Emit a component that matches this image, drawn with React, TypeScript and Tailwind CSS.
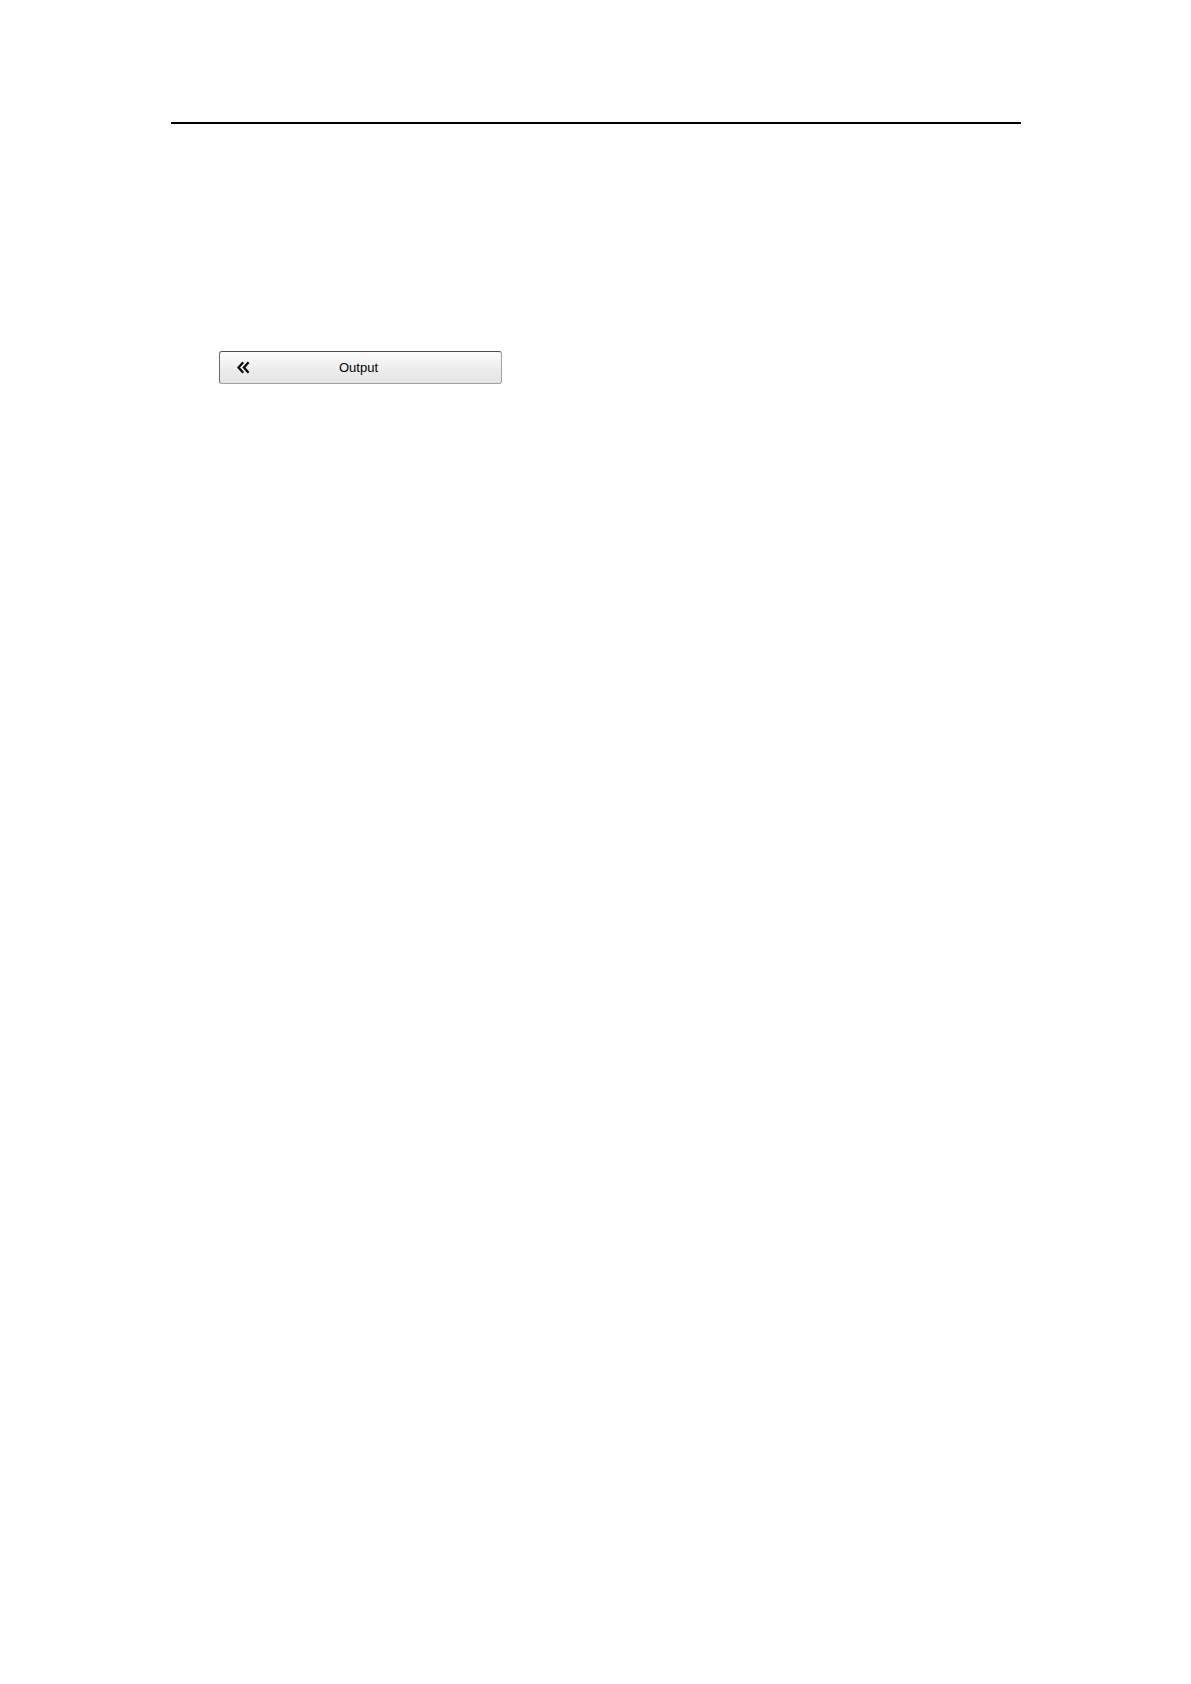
function DoubleChevronLeft() {
  return (
    <svg viewBox="0 0 13 13" className="h-[13px] w-[13px] shrink-0" fill="none" stroke="#0a0a0a" strokeWidth="2.3" aria-hidden="true">
      <path d="M6.2 1.3 1.5 6.5 6.2 11.7" />
      <path d="M11.6 1.3 6.9 6.5 11.6 11.7" />
    </svg>
  );
}

export default function App() {
  return (
    <div className="min-h-screen bg-white pt-[122px] pr-[170px] pl-[171px] font-['Liberation_Sans',Arial,sans-serif]">
      <header>
        <hr className="border-0 border-t-2 border-black" />
      </header>

      <main className="px-12 pt-[227px]">
        <button
          type="button"
          className="flex h-[33px] w-full max-w-[283px] items-center rounded-[3px] border border-[#a0a0a0] border-t-[#505050] border-l-[#686868] bg-linear-to-b from-[#fdfdfd] via-[#ebebeb] via-60% to-[#e5e5e5] pr-[34px] pl-[17px] text-[13px] leading-5 text-black"
        >
          <DoubleChevronLeft />
          <span className="flex-1 text-center">Output</span>
        </button>
      </main>
    </div>
  );
}
